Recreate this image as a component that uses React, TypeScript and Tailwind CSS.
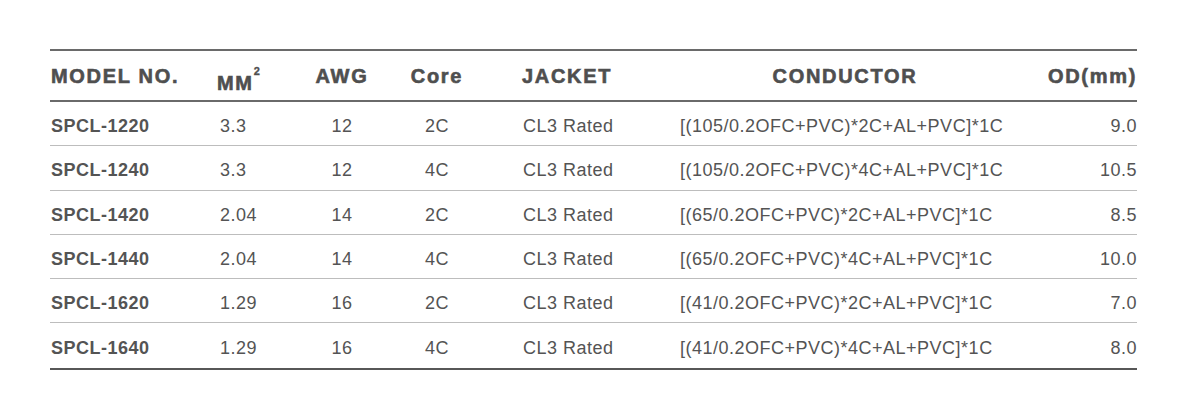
import React from 'react';

const rows = [
  { model: 'SPCL-1220', mm: '3.3', awg: '12', core: '2C', jacket: 'CL3 Rated', conductor: '[(105/0.2OFC+PVC)*2C+AL+PVC]*1C', od: '9.0' },
  { model: 'SPCL-1240', mm: '3.3', awg: '12', core: '4C', jacket: 'CL3 Rated', conductor: '[(105/0.2OFC+PVC)*4C+AL+PVC]*1C', od: '10.5' },
  { model: 'SPCL-1420', mm: '2.04', awg: '14', core: '2C', jacket: 'CL3 Rated', conductor: '[(65/0.2OFC+PVC)*2C+AL+PVC]*1C', od: '8.5' },
  { model: 'SPCL-1440', mm: '2.04', awg: '14', core: '4C', jacket: 'CL3 Rated', conductor: '[(65/0.2OFC+PVC)*4C+AL+PVC]*1C', od: '10.0' },
  { model: 'SPCL-1620', mm: '1.29', awg: '16', core: '2C', jacket: 'CL3 Rated', conductor: '[(41/0.2OFC+PVC)*2C+AL+PVC]*1C', od: '7.0' },
  { model: 'SPCL-1640', mm: '1.29', awg: '16', core: '4C', jacket: 'CL3 Rated', conductor: '[(41/0.2OFC+PVC)*4C+AL+PVC]*1C', od: '8.0' },
];

export default function App() {
  return (
    <div
      className="w-[1187px] h-[419px] bg-white pt-[49px] pl-[50px]"
      style={{ fontFamily: '"Liberation Sans", Arial, sans-serif' }}
    >
      <div className="w-[1087px] border-t-2 border-b-2 border-t-[#6a6a6a] border-b-[#575757] text-[#545454]">
        {/* Header */}
        <div className="flex h-[51px] items-center border-b-2 border-[#6a6a6a] text-[20px] font-bold tracking-[1.7px] text-[#4f4f4f] [-webkit-text-stroke:0.6px_#4f4f4f]">
          <div className="w-[165px] pl-[1px]">MODEL NO.</div>
          <div className="w-[80px] pl-[2px]">
            <span className="relative top-[7px]">
              MM<span className="relative -top-[15px] text-[11px] tracking-normal [-webkit-text-stroke:0.3px_#4f4f4f]">2</span>
            </span>
          </div>
          <div className="w-[94px] text-center">AWG</div>
          <div className="w-[96px] text-center">Core</div>
          <div className="w-[160px] pl-[37px]">JACKET</div>
          <div className="w-[400px] text-center">CONDUCTOR</div>
          <div className="w-[92px] text-right mr-[-2px]">OD(mm)</div>
        </div>

        {/* Rows */}
        {rows.map((r, i) => (
          <div
            key={r.model}
            className={
              'flex h-[44.3px] items-center pt-[6px] text-[18px] tracking-[0.5px] ' +
              (i < rows.length - 1 ? 'border-b border-[#bdbdbd]' : '')
            }
          >
            <div className="w-[165px] pl-[1px] font-bold">{r.model}</div>
            <div className="w-[80px] pl-[5px]">{r.mm}</div>
            <div className="w-[94px] text-center">{r.awg}</div>
            <div className="w-[96px] text-center">{r.core}</div>
            <div className="w-[160px] pl-[38px]">{r.jacket}</div>
            <div className="w-[400px] pl-[35px]">{r.conductor}</div>
            <div className="w-[92px] text-right mr-[-1px]">{r.od}</div>
          </div>
        ))}
      </div>
    </div>
  );
}
